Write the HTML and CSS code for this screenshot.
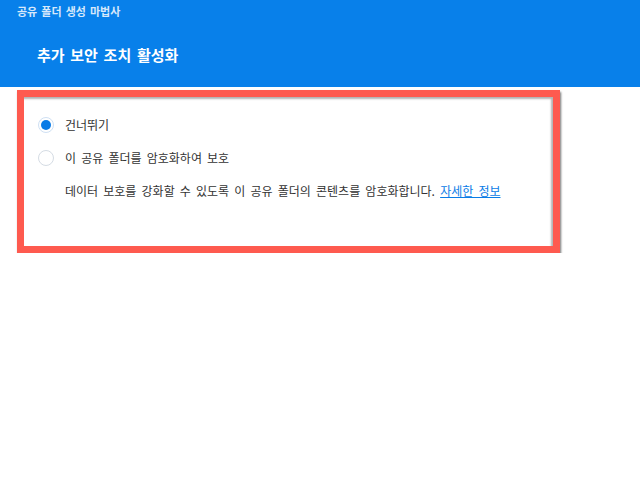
FILE: index.html
```html
<!DOCTYPE html>
<html lang="ko">
<head>
    <meta charset="UTF-8">
    <meta name="viewport" content="width=device-width, initial-scale=1.0">
    <title>공유 폴더 생성 마법사</title>
    <link rel="stylesheet" href="styles.css">
</head>
<body>

<div class="wizard-header">
    <div class="wizard-name">공유 폴더 생성 마법사</div>
    <h1 class="step-title">추가 보안 조치 활성화</h1>
</div>

<div class="highlight-box">
    <ul class="options">
        <li>
            <input type="radio" id="skip" name="security" checked>
            <label for="skip" class="option-label">건너뛰기</label>
        </li>
        <li>
            <input type="radio" id="encrypt" name="security">
            <label for="encrypt" class="option-label">이 공유 폴더를 암호화하여 보호</label>
        </li>
    </ul>
    <p class="description">데이터 보호를 강화할 수 있도록 이 공유 폴더의 콘텐츠를 암호화합니다. <a href="#" class="more-link">자세한 정보</a></p>
</div>

</body>
</html>
```

FILE: styles.css
```css
body {
    font-family: "Noto Sans CJK KR", "Noto Sans", sans-serif;
    background-color: #fff;
    margin: 0;
    color: #333;
}
.wizard-header {
    background-color: #0880ea;
    height: 87px;
    padding: 3px 0 0 17px;
    box-sizing: border-box;
}
.wizard-name {
    font-size: 11px;
    font-weight: bold;
    color: #d6e8fb;
    line-height: 16px;
    word-spacing: 1px;
}
.step-title {
    margin: 25px 0 0 20px;
    font-size: 15px;
    font-weight: bold;
    color: #fff;
    line-height: 22px;
    word-spacing: 1.5px;
}
/* red annotation frame around the panel */
.highlight-box {
    margin: 3px 0 0 17px;
    width: 543px;
    height: 163px;
    box-sizing: border-box;
    border: 7px solid #fe5a4f;
    box-shadow: 1px 2px 2px rgba(0, 0, 0, 0.55), inset -2px 2px 2px rgba(0, 0, 0, 0.3);
    padding: 20px 0 0 14px;
}
.options {
    list-style-type: none;
    padding: 0;
    margin: 0;
}
.options li {
    display: flex;
    align-items: center;
    height: 16px;
    margin-bottom: 17px;
}
input[type="radio"] {
    appearance: none;
    width: 16px;
    height: 16px;
    margin: 0 11px 0 0;
    border: 1px solid #d5dce4;
    border-radius: 50%;
    box-sizing: border-box;
    background: #fff;
    display: grid;
    place-items: center;
}
input[type="radio"]:checked {
    border-color: #cfe0f3;
}
input[type="radio"]:checked::after {
    content: "";
    width: 10px;
    height: 10px;
    border-radius: 50%;
    background: #0a7ce6;
}
.option-label,
.description {
    font-size: 12px;
    line-height: 16px;
    color: #333;
    word-spacing: 1.8px;
}
.description {
    margin: 1px 0 0 27px;
}
.more-link {
    color: #0a7ce6;
    text-decoration: underline;
}
```
